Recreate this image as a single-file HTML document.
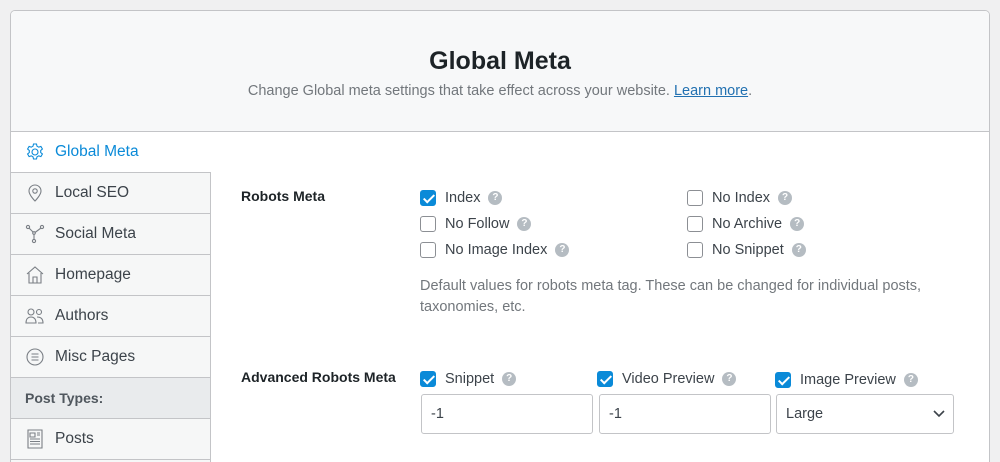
<!DOCTYPE html>
<html><head><style>
*{box-sizing:border-box;margin:0;padding:0}
html,body{width:1000px;height:462px;overflow:hidden}
body{background:#f0f0f1;font-family:"Liberation Sans",Arial,sans-serif;position:relative}
.wrap{position:absolute;left:10px;top:10px;width:980px;height:470px;background:#fff;border:1px solid #c3c4c7;border-radius:5px;overflow:hidden}
.head{position:absolute;left:0;top:0;width:978px;height:121px;background:#f7f8f9;border-bottom:1px solid #c3c4c7;text-align:center}
.head h1{position:absolute;top:36px;width:100%;font-size:25px;font-weight:bold;color:#1d2327}
.head p{position:absolute;top:72px;width:100%;font-size:14.5px;color:#72777c}
.head a{color:#2271b1;text-decoration:underline}
.side{position:absolute;left:0;top:121px;width:200px}
.it{height:41px;border-right:1px solid #c3c4c7;border-bottom:1px solid #c3c4c7;background:#f6f7f7;display:flex;align-items:center;padding-left:14px;font-size:15.5px;color:#3c434a}
.it svg{width:20px;height:20px;margin-right:10px;fill:none;stroke:#7a7f85;stroke-width:1.1}
.it.act{background:#fff;border-right:none;color:#0a8ad8}
.it.act svg{stroke:#0a8ad8}
.it.pt{background:#e9ebed;font-weight:bold;font-size:14px;color:#50575e}
.lab{position:absolute;font-size:14px;font-weight:bold;color:#1d2327}
.cb{position:absolute;font-size:14.5px;color:#3c434a;display:flex;align-items:center;height:18px}
.box{width:16px;height:16px;border:1px solid #8c8f94;border-radius:3px;margin-right:9px;background:#fff;position:relative}
.box.on{background:#0a8ad8;border-color:#0a8ad8}
.box.on:after{content:"";position:absolute;left:5px;top:1px;width:4px;height:9px;border:solid #fff;border-width:0 2px 2px 0;transform:rotate(45deg)}
.q{display:inline-block;width:14px;height:14px;border-radius:50%;background:#b5bcc2;color:#fff;font-size:10px;font-weight:bold;text-align:center;line-height:14px;margin-left:8px}
.desc{position:absolute;left:420px;top:276px;width:545px;font-size:14.5px;line-height:21px;color:#72777c}
.inp{position:absolute;top:394px;height:40px;border:1px solid #c3c4c7;border-radius:3px;background:#fff;font-size:14.5px;color:#3c434a;padding:11px 9px}
</style></head><body>
<div class="wrap">
<div class="head"><h1>Global Meta</h1><p>Change Global meta settings that take effect across your website. <a>Learn more</a>.</p></div>
<div class="side">
<div class="it act"><svg viewBox="0 0 20 20"><circle cx="10" cy="10" r="3"/><path d="M8.5 2h3l.5 2.2 1.8 1 2.1-.8 1.5 2.6-1.7 1.5v2l1.7 1.5-1.5 2.6-2.1-.8-1.8 1-.5 2.2h-3l-.5-2.2-1.8-1-2.1.8-1.5-2.6 1.7-1.5v-2L2.6 7l1.5-2.6 2.1.8 1.8-1z"/></svg>Global Meta</div>
<div class="it"><svg viewBox="0 0 20 20"><path d="M10 18s-6-6-6-10a6 6 0 0 1 12 0c0 4-6 10-6 10z"/><circle cx="10" cy="8" r="2.2"/></svg>Local SEO</div>
<div class="it"><svg viewBox="0 0 20 20"><circle cx="3" cy="3" r="1.6"/><circle cx="17" cy="3" r="1.6"/><circle cx="9" cy="17" r="1.6"/><circle cx="9" cy="9" r="1.3"/><path d="M4 4l4 4M16 4l-6 4.5M9 10v5.5"/></svg>Social Meta</div>
<div class="it"><svg viewBox="0 0 20 20"><path d="M2 9L10 2l8 7M4 8v10h12V8M8 18v-6h4v6"/></svg>Homepage</div>
<div class="it"><svg viewBox="0 0 20 20"><circle cx="6" cy="6" r="3"/><circle cx="14" cy="6" r="2.5"/><path d="M1 17c0-4 2-6 5-6s5 2 5 6zM12 11c3 0 6 1 6 6h-5"/></svg>Authors</div>
<div class="it"><svg viewBox="0 0 20 20"><circle cx="10" cy="10" r="8"/><path d="M6.5 7h7M6.5 10h7M6.5 13h7"/></svg>Misc Pages</div>
<div class="it pt">Post Types:</div>
<div class="it"><svg viewBox="0 0 20 20"><path d="M3 1h14v18H3zM5 4h5v4H5zM12 4h3M12 6h3M5 10h10M5 12.5h10M5 15h10"/></svg>Posts</div>
<div class="it"></div>
</div>
</div>
<div class="lab" style="left:241px;top:188px">Robots Meta</div>
<div class="cb" style="left:420px;top:189px"><span class="box on"></span>Index<span class="q">?</span></div>
<div class="cb" style="left:420px;top:215px"><span class="box"></span>No Follow<span class="q">?</span></div>
<div class="cb" style="left:420px;top:241px"><span class="box"></span>No Image Index<span class="q">?</span></div>
<div class="cb" style="left:687px;top:189px"><span class="box"></span>No Index<span class="q">?</span></div>
<div class="cb" style="left:687px;top:215px"><span class="box"></span>No Archive<span class="q">?</span></div>
<div class="cb" style="left:687px;top:241px"><span class="box"></span>No Snippet<span class="q">?</span></div>
<div class="desc">Default values for robots meta tag. These can be changed for individual posts, taxonomies, etc.</div>
<div class="lab" style="left:241px;top:369px">Advanced Robots Meta</div>
<div class="cb" style="left:420px;top:370px"><span class="box on"></span>Snippet<span class="q">?</span></div>
<div class="cb" style="left:597px;top:370px"><span class="box on"></span>Video Preview<span class="q">?</span></div>
<div class="cb" style="left:775px;top:371px"><span class="box on"></span>Image Preview<span class="q">?</span></div>
<div class="inp" style="left:421px;width:172px">-1</div>
<div class="inp" style="left:599px;width:172px">-1</div>
<div class="inp" style="left:776px;width:178px">Large<svg style="position:absolute;right:8px;top:15px" width="12" height="8" viewBox="0 0 12 8"><path d="M1 1l5 5 5-5" fill="none" stroke="#3c434a" stroke-width="1.6"/></svg></div>
</body></html>
